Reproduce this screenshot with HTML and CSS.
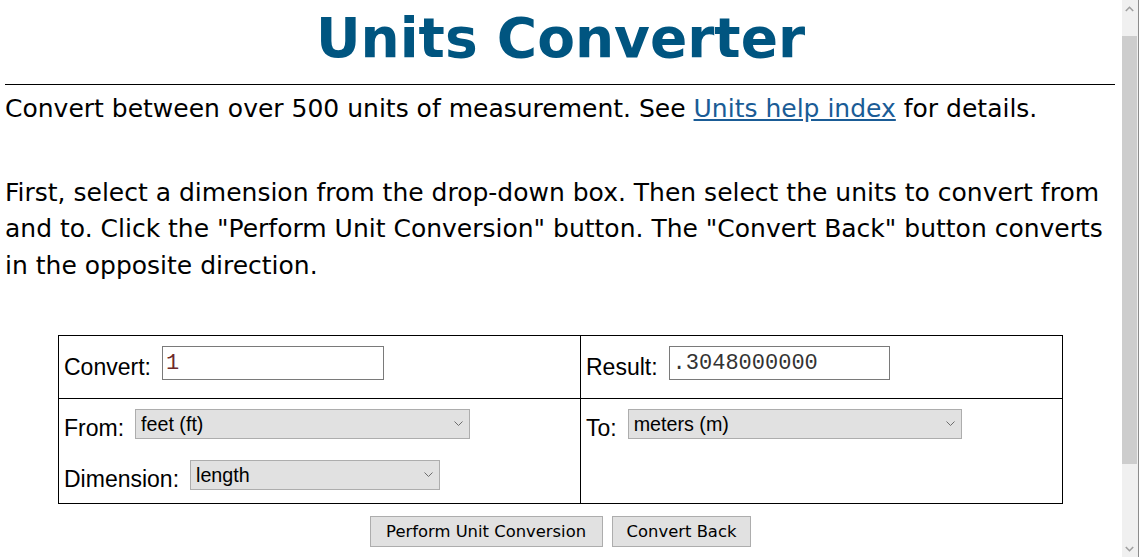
FILE: index.html
```html
<!DOCTYPE html>
<html lang="en">
<head>
<meta charset="utf-8">
<title>Units Converter</title>
<link rel="stylesheet" href="styles.css">
</head>
<body>
<h1 class="title">Units Converter</h1>
<hr class="rule">
<p class="intro">Convert between over 500 units of measurement. See <a class="link" href="#">Units help index</a> for details.</p>
<p class="instructions">First, select a dimension from the drop-down box. Then select the units to convert from and to. Click the "Perform Unit Conversion" button. The "Convert Back" button converts in the opposite direction.</p>

<form class="converter-form">
  <div class="converter">
    <div class="cell cell-left cell-top">
      <div class="field">
        <label class="field-label" for="from-value">Convert:</label>
        <input class="value-input value-from" id="from-value" type="text" value="1">
      </div>
    </div>
    <div class="cell cell-top">
      <div class="field">
        <label class="field-label" for="to-value">Result:</label>
        <input class="value-input value-to" id="to-value" type="text" value=".3048000000">
      </div>
    </div>
    <div class="cell cell-left cell-bottom">
      <div class="field">
        <label class="field-label label-select" for="from-unit">From:</label>
        <span class="select-wrap">
          <select class="unit-select select-from" id="from-unit"><option>feet (ft)</option></select>
          <svg class="chevron" width="9" height="6" viewBox="0 0 9 6"><path d="M0.5 0.5 L4.5 4.5 L8.5 0.5" fill="none" stroke="#6d6d6d" stroke-width="1"/></svg>
        </span>
      </div>
      <div class="field field-dimension">
        <label class="field-label label-select" for="dimension">Dimension:</label>
        <span class="select-wrap">
          <select class="unit-select select-dimension" id="dimension"><option>length</option></select>
          <svg class="chevron" width="9" height="6" viewBox="0 0 9 6"><path d="M0.5 0.5 L4.5 4.5 L8.5 0.5" fill="none" stroke="#6d6d6d" stroke-width="1"/></svg>
        </span>
      </div>
    </div>
    <div class="cell cell-bottom">
      <div class="field">
        <label class="field-label label-select" for="to-unit">To:</label>
        <span class="select-wrap">
          <select class="unit-select select-to" id="to-unit"><option>meters (m)</option></select>
          <svg class="chevron" width="9" height="6" viewBox="0 0 9 6"><path d="M0.5 0.5 L4.5 4.5 L8.5 0.5" fill="none" stroke="#6d6d6d" stroke-width="1"/></svg>
        </span>
      </div>
    </div>
  </div>
  <div class="actions">
    <button class="action-button action-primary" type="button">Perform Unit Conversion</button>
    <button class="action-button" type="button">Convert Back</button>
  </div>
</form>

<div class="scrollbar" aria-hidden="true">
  <div class="scroll-button scroll-up">
    <svg width="9" height="6" viewBox="0 0 9 6"><path d="M0.8 5 L4.5 1.3 L8.2 5" fill="none" stroke="#a0a0a0" stroke-width="1.6"/></svg>
  </div>
  <div class="scroll-track"><div class="scroll-thumb"></div></div>
  <div class="scroll-button scroll-down">
    <svg width="9" height="6" viewBox="0 0 9 6"><path d="M0.8 1 L4.5 4.7 L8.2 1" fill="none" stroke="#a0a0a0" stroke-width="1.6"/></svg>
  </div>
</div>
</body>
</html>
```
FILE: styles.css
```css
html {
  background: #fff;
  overflow: hidden;
}

body {
  margin: 0 23px 0 5px;
  font-family: "DejaVu Sans", Verdana, sans-serif;
  font-size: 25px;
  line-height: 36.5px;
  color: #000;
}

.title {
  margin: 6px 0 0;
  font-size: 55px;
  line-height: 64px;
  font-weight: bold;
  text-align: center;
  color: #005580;
}

.rule {
  margin: 14px 1px 0 0;
  border: 0;
  border-top: 1px solid #000;
  height: 0;
}

.intro {
  margin: 6px 0 0;
}

.link {
  color: #1a5c96;
  text-decoration: underline;
}

.instructions {
  margin: 47px 0 0;
}

.converter-form {
  margin: 51px 0 0;
}

.converter {
  box-sizing: border-box;
  width: 1005px;
  margin: 0 auto;
  border: 1px solid #000;
  display: grid;
  grid-template-columns: 522px 1fr;
  font-family: "Liberation Sans", Arial, sans-serif;
  font-size: 23px;
  line-height: normal;
}

.cell {
  box-sizing: border-box;
  padding: 10px 5px 0;
}
.cell-left {
  border-right: 1px solid #000;
}
.cell-top {
  height: 63px;
  border-bottom: 1px solid #000;
}
.cell-bottom {
  height: 104px;
  padding-top: 10px;
}

.field {
  display: flex;
  align-items: flex-start;
  gap: 11px;
}
.field-dimension {
  margin-top: 18px;
}

.field-label {
  margin-top: 8px;
  white-space: nowrap;
}
.label-select {
  margin-top: 6px;
}

.value-input {
  box-sizing: border-box;
  width: 222px;
  height: 34px;
  margin: 0;
  padding: 0 3px;
  border: 1px solid #7a7a7a;
  border-radius: 0;
  background: #fff;
  font-family: "Liberation Mono", "Courier New", monospace;
  font-size: 22px;
  outline: none;
}
.value-from {
  color: #6e2a2a;
}
.value-to {
  width: 221px;
  color: #333;
}

.select-wrap {
  position: relative;
  display: inline-block;
}

.unit-select {
  -webkit-appearance: none;
  appearance: none;
  box-sizing: border-box;
  height: 30px;
  margin: 0;
  padding: 0 20px 0 5px;
  border: 1px solid #adadad;
  border-radius: 0;
  background: #e1e1e1;
  color: #000;
  font-family: "Liberation Sans", Arial, sans-serif;
  font-size: 19.7px;
  outline: none;
}
.select-from {
  width: 335px;
}
.select-dimension {
  width: 250px;
}
.select-to {
  width: 334px;
}

.chevron {
  position: absolute;
  right: 7px;
  top: 12px;
  pointer-events: none;
}

.actions {
  display: flex;
  justify-content: center;
  gap: 9px;
  margin-top: 12px;
}

.action-button {
  box-sizing: border-box;
  height: 31px;
  margin: 0;
  padding: 0 14px;
  border: 1px solid #adadad;
  border-radius: 0;
  background: #e1e1e1;
  color: #000;
  font-family: "DejaVu Sans", Verdana, sans-serif;
  font-size: 16.4px;
}
.action-primary {
  padding: 0 15.5px;
}

/* window scrollbar (browser chrome) */
.scrollbar {
  position: fixed;
  top: 0;
  right: 0;
  bottom: 0;
  width: 17px;
  display: flex;
  flex-direction: column;
  background: #f0f0f0;
  border-right: 1px solid #8c8c8c;
  box-sizing: border-box;
}
.scroll-button {
  height: 17px;
  display: flex;
  align-items: center;
  justify-content: center;
  padding-right: 1px;
}
.scroll-track {
  flex: 1;
  padding: 19px 1px 76px 0;
  display: flex;
  flex-direction: column;
}
.scroll-thumb {
  flex: 1;
  background: #cdcdcd;
}
```
